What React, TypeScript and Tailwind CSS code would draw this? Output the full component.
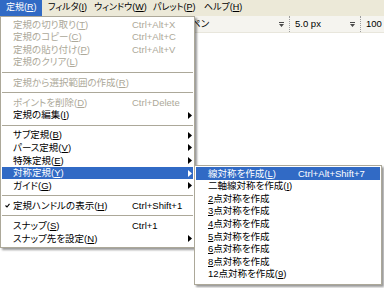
import type { ReactNode } from "react";

type Item =
  | "sep"
  | {
      label: ReactNode;
      shortcut?: string;
      disabled?: boolean;
      sub?: boolean;
      check?: boolean;
      active?: boolean;
    };

const m = (pre: string, key: string, post = "") => (
  <>
    {pre}
    <span className="underline underline-offset-[1px]">{key}</span>
    {post}
  </>
);

const mainItems: Item[] = [
  { label: m("定規の切り取り(", "T", ")"), shortcut: "Ctrl+Alt+X", disabled: true },
  { label: m("定規のコピー(", "C", ")"), shortcut: "Ctrl+Alt+C", disabled: true },
  { label: m("定規の貼り付け(", "P", ")"), shortcut: "Ctrl+Alt+V", disabled: true },
  { label: m("定規のクリア(", "L", ")"), disabled: true },
  "sep",
  { label: m("定規から選択範囲の作成(", "R", ")"), disabled: true },
  "sep",
  { label: m("ポイントを削除(", "D", ")"), shortcut: "Ctrl+Delete", disabled: true },
  { label: m("定規の編集(", "I", ")"), sub: true },
  "sep",
  { label: m("サブ定規(", "B", ")"), sub: true },
  { label: m("パース定規(", "V", ")"), sub: true },
  { label: m("特殊定規(", "E", ")"), sub: true },
  { label: m("対称定規(", "Y", ")"), sub: true, active: true },
  { label: m("ガイド(", "G", ")"), sub: true },
  "sep",
  { label: m("定規ハンドルの表示(", "H", ")"), shortcut: "Ctrl+Shift+1", check: true },
  "sep",
  { label: m("スナップ(", "S", ")"), shortcut: "Ctrl+1" },
  { label: m("スナップ先を設定(", "N", ")"), sub: true },
];

const subItems: Item[] = [
  { label: m("線対称を作成(", "L", ")"), shortcut: "Ctrl+Alt+Shift+7", active: true },
  { label: m("二軸線対称を作成(", "I", ")") },
  { label: m("", "2", "点対称を作成") },
  { label: m("", "3", "点対称を作成") },
  { label: m("", "4", "点対称を作成") },
  { label: m("", "5", "点対称を作成") },
  { label: m("", "6", "点対称を作成") },
  { label: m("", "8", "点対称を作成") },
  { label: m("12点対称を作成(", "9", ")") },
];

function Arrow({ white }: { white?: boolean }) {
  return (
    <svg width="4" height="7" viewBox="0 0 4 7" className="mr-[1px] shrink-0">
      <path d="M0 0L4 3.5L0 7z" fill={white ? "#fff" : "#000"} />
    </svg>
  );
}

function Check() {
  return (
    <svg width="5" height="5" viewBox="0 0 5 5">
      <polyline points="0.5,2.5 2,4 4.5,0.8" fill="none" stroke="#000" strokeWidth="1.1" />
    </svg>
  );
}

function Menu({ items, labelW, lead }: { items: Item[]; labelW: string; lead: string }) {
  return (
    <div className="flex flex-col">
      {items.map((it, i) =>
        it === "sep" ? (
          <div key={i} className="h-[7.6px] flex items-center">
            <div className="h-px w-full bg-[#aca899]" />
          </div>
        ) : (
          <div
            key={i}
            className={`h-[12.6px] flex items-center leading-none ${
              it.active ? "bg-[#316ac5] text-white" : it.disabled ? "text-[#aca899]" : "text-black"
            }`}
          >
            <div className={`${lead} shrink-0 flex items-center justify-center`}>
              {it.check && <Check />}
            </div>
            <div className={`${labelW} shrink-0 whitespace-nowrap`}>{it.label}</div>
            <div className="flex-1 whitespace-nowrap">{it.shortcut}</div>
            {it.sub && <Arrow white={it.active} />}
          </div>
        )
      )}
    </div>
  );
}

function Drop() {
  return (
    <svg width="5" height="5" viewBox="0 0 5 5" className="shrink-0">
      <path d="M0 0h5v1H0z M0 2h5L2.5 5z" fill="#4a4a4a" />
    </svg>
  );
}

export default function App() {
  return (
    <div className="relative w-[384px] h-[288px] overflow-hidden bg-white text-[9.5px] font-['Liberation_Sans','Noto_Sans_CJK_JP',sans-serif] [font-feature-settings:'palt']">
      <div className="h-[16px] bg-[#ece9d8] grid grid-cols-[42px_46px_59px_51px_1fr] items-center whitespace-nowrap text-[9px]">
        <div className="h-full pl-[6px] flex items-center bg-[#316ac5] text-white">
          {m("定規(", "R", ")")}
        </div>
        <div className="pl-[6px]">{m("フィルタ(", "I", ")")}</div>
        <div className="pl-[6px]">{m("ウィンドウ(", "W", ")")}</div>
        <div className="pl-[6px]">{m("パレット(", "P", ")")}</div>
        <div className="pl-[6px]">{m("ヘルプ(", "H", ")")}</div>
      </div>

      <div className="h-[17px] bg-[#f5f4ef] border-b border-[#e8e6dc] flex items-center pl-[191px] whitespace-nowrap">
        <span className="w-[88px] shrink-0">ペン</span>
        <Drop />
        <div className="ml-[5px] h-[16px] border-l border-dotted border-[#9c9c9c]" />
        <span className="ml-[5px] w-[55px] shrink-0">5.0 px</span>
        <Drop />
        <div className="ml-[5px] h-[16px] border-l border-dotted border-[#9c9c9c]" />
        <span className="ml-[5px]">100</span>
      </div>

      <div className="absolute left-0 top-[16px] w-[195px] bg-white border border-[#aca899] p-[1px] pb-[2px] shadow-[2px_2px_2px_rgba(0,0,0,0.4)]">
        <Menu items={mainItems} labelW="w-[119px]" lead="w-[11px]" />
      </div>

      <div className="absolute left-[194px] top-[165px] w-[188px] bg-white border border-[#aca899] p-[1px] pb-[4px] shadow-[2px_2px_2px_rgba(0,0,0,0.4)]">
        <Menu items={subItems} labelW="w-[90px]" lead="w-[12px]" />
      </div>
    </div>
  );
}
